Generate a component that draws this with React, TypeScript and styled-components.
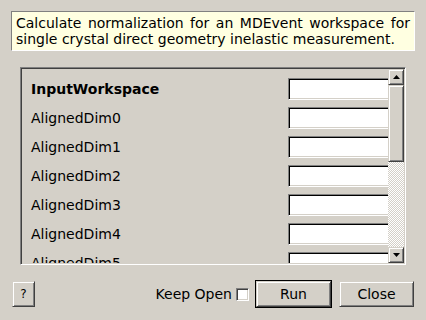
import styled, { createGlobalStyle } from "styled-components"

const GlobalStyle = createGlobalStyle`
  html, body {
    margin: 0;
    padding: 0;
    background: #d4d0c8;
  }
  body {
    font-family: "DejaVu Sans", "Liberation Sans", sans-serif;
    font-size: 14px;
    color: #000;
  }
`

const properties = [
  "InputWorkspace",
  "AlignedDim0",
  "AlignedDim1",
  "AlignedDim2",
  "AlignedDim3",
  "AlignedDim4",
  "AlignedDim5",
]

const App = () => {
  return (
    <Dialog>
      <GlobalStyle />
      <HelpBox>
        Calculate normalization for an MDEvent workspace for single crystal direct geometry inelastic
        measurement.
      </HelpBox>

      <Frame>
        <Viewport>
          <Rows>
            {properties.map((name, i) => (
              <Row key={name}>
                <PropLabel $mandatory={i === 0}>{name}</PropLabel>
                <Field />
              </Row>
            ))}
          </Rows>
        </Viewport>
        <ScrollBar>
          <ArrowButton>
            <svg width="7" height="4" viewBox="0 0 7 4">
              <polygon points="3.5,0 7,4 0,4" fill="#000" />
            </svg>
          </ArrowButton>
          <Thumb />
          <Track />
          <ArrowButton>
            <svg width="7" height="4" viewBox="0 0 7 4">
              <polygon points="0,0 7,0 3.5,4" fill="#000" />
            </svg>
          </ArrowButton>
        </ScrollBar>
      </Frame>

      <ButtonBar>
        <HelpButton>?</HelpButton>
        <Spacer />
        <KeepOpen>Keep Open</KeepOpen>
        <CheckBox />
        <DefaultFrame>
          <PushButton>Run</PushButton>
        </DefaultFrame>
        <PushButton>Close</PushButton>
      </ButtonBar>
    </Dialog>
  )
}
export default App

const Dialog = styled.div`
  width: 426px;
  height: 320px;
  display: flex;
  flex-direction: column;
  padding-top: 11px;
  box-sizing: border-box;
  overflow: hidden;
`

const HelpBox = styled.div`
  // size
  margin: 0 11px;
  height: 40px;
  box-sizing: border-box;
  padding: 3px 4px 0 4px;

  // look
  background: #ffffe1;
  border-top: 1px solid #808080;
  border-left: 1px solid #808080;
  border-right: 1px solid #ffffff;
  border-bottom: 1px solid #ffffff;

  // text
  line-height: 16px;
  text-align: justify;
`

const Frame = styled.div`
  margin: 16px 0 0 20px;
  width: 386px;
  height: 198px;
  box-sizing: border-box;
  display: flex;
  border-top: 1px solid #808080;
  border-left: 1px solid #808080;
  border-right: 1px solid #ffffff;
  border-bottom: 1px solid #ffffff;
  box-shadow: inset 1px 1px 0 #404040, inset -1px -1px 0 #d4d0c8;
  padding: 1px;
`

const Viewport = styled.div`
  flex: 1;
  overflow: hidden;
`

const Rows = styled.div`
  display: flex;
  flex-direction: column;
  gap: 7px;
  padding-top: 9px;
  width: 390px;
`

const Row = styled.div`
  display: grid;
  grid-template-columns: 266px 120px;
  align-items: center;
  height: 22px;
`

const PropLabel = styled.div<{ $mandatory: boolean }>`
  padding-left: 9px;
  font-weight: ${(p) => (p.$mandatory ? "bold" : "normal")};
`

const Field = styled.div`
  height: 22px;
  box-sizing: border-box;
  background: #fff;
  border-top: 1px solid #808080;
  border-left: 1px solid #808080;
  border-right: 1px solid #ffffff;
  border-bottom: 1px solid #ffffff;
  box-shadow: inset 1px 1px 0 #000, inset -1px -1px 0 #d4d0c8;
`

const ScrollBar = styled.div`
  width: 16px;
  display: flex;
  flex-direction: column;
`

const raised = `
  background: #d4d0c8;
  box-sizing: border-box;
  border-top: 1px solid #d4d0c8;
  border-left: 1px solid #d4d0c8;
  border-right: 1px solid #404040;
  border-bottom: 1px solid #404040;
  box-shadow: inset 1px 1px 0 #ffffff, inset -1px -1px 0 #808080;
`

const ArrowButton = styled.div`
  ${raised}
  height: 16px;
  display: flex;
  align-items: center;
  justify-content: center;
`

const Thumb = styled.div`
  ${raised}
  height: 77px;
`

const Track = styled.div`
  flex: 1;
  background: repeating-conic-gradient(#d4d0c8 0% 25%, #ffffff 0% 50%) 0 0 / 2px 2px;
`

const ButtonBar = styled.div`
  margin-top: 15px;
  height: 28px;
  padding: 0 12px;
  display: flex;
  align-items: center;
`

const Spacer = styled.div`
  flex: 1;
`

const PushButton = styled.button`
  ${raised}
  width: 75px;
  height: 26px;
  padding: 0;
  font-family: "DejaVu Sans", "Liberation Sans", sans-serif;
  font-size: 14px;
  color: #000;
`

const HelpButton = styled(PushButton)`
  width: 23px;
  font-size: 12px;
`

const DefaultFrame = styled.div`
  border: 1px solid #000;
  display: flex;
  margin-right: 7px;
`

const KeepOpen = styled.span`
  margin-right: 4px;
`

const CheckBox = styled.div`
  width: 13px;
  height: 13px;
  box-sizing: border-box;
  background: #fff;
  border-top: 1px solid #808080;
  border-left: 1px solid #808080;
  border-right: 1px solid #ffffff;
  border-bottom: 1px solid #ffffff;
  box-shadow: inset 1px 1px 0 #404040, inset -1px -1px 0 #d4d0c8;
  margin-right: 6px;
`
